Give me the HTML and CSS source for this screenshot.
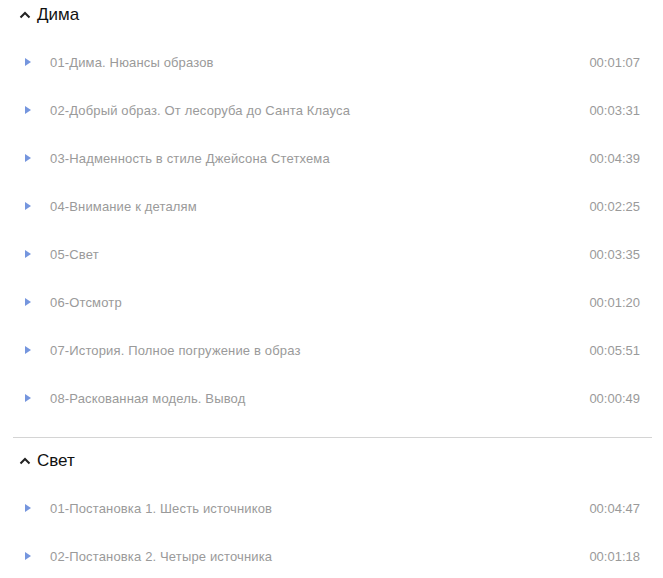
FILE: index.html
```html
<!DOCTYPE html>
<html lang="ru">

<head>
    <meta charset="UTF-8">
    <meta name="viewport" content="width=device-width, initial-scale=1.0">
    <title>Уроки</title>
    <link rel="stylesheet" href="styles.css">
</head>

<body>
    <div class="course">

        <div class="section">
            <div class="section-title">
                <svg class="chevron" width="12" height="8" viewBox="0 0 12 8"><path d="M1.5 6.5 L6 2 L10.5 6.5" fill="none" stroke="#222" stroke-width="2"/></svg>
                <span>Дима</span>
            </div>
            <ul class="lessons">
                <li class="lesson"><i class="play"></i><span class="name">01-Дима. Нюансы образов</span><span class="time">00:01:07</span></li>
                <li class="lesson"><i class="play"></i><span class="name">02-Добрый образ. От лесоруба до Санта Клауса</span><span class="time">00:03:31</span></li>
                <li class="lesson"><i class="play"></i><span class="name">03-Надменность в стиле Джейсона Стетхема</span><span class="time">00:04:39</span></li>
                <li class="lesson"><i class="play"></i><span class="name">04-Внимание к деталям</span><span class="time">00:02:25</span></li>
                <li class="lesson"><i class="play"></i><span class="name">05-Свет</span><span class="time">00:03:35</span></li>
                <li class="lesson"><i class="play"></i><span class="name">06-Отсмотр</span><span class="time">00:01:20</span></li>
                <li class="lesson"><i class="play"></i><span class="name">07-История. Полное погружение в образ</span><span class="time">00:05:51</span></li>
                <li class="lesson"><i class="play"></i><span class="name">08-Раскованная модель. Вывод</span><span class="time">00:00:49</span></li>
            </ul>
        </div>

        <div class="section">
            <div class="section-title">
                <svg class="chevron" width="12" height="8" viewBox="0 0 12 8"><path d="M1.5 6.5 L6 2 L10.5 6.5" fill="none" stroke="#222" stroke-width="2"/></svg>
                <span>Свет</span>
            </div>
            <ul class="lessons">
                <li class="lesson"><i class="play"></i><span class="name">01-Постановка 1. Шесть источников</span><span class="time">00:04:47</span></li>
                <li class="lesson"><i class="play"></i><span class="name">02-Постановка 2. Четыре источника</span><span class="time">00:01:18</span></li>
            </ul>
        </div>

    </div>
</body>

</html>
```

FILE: styles.css
```css
body {
    font-family: "Liberation Sans", Arial, sans-serif;
    margin: 0;
    padding: 0;
    background-color: #fff;
}

.course {
    padding: 0 11px 0 13px;
}

.section {
    padding-bottom: 15px;
    border-bottom: 1px solid #d4d4d4;
}

.section + .section {
    padding-top: 8px;
    border-bottom: none;
}

/* Заголовок раздела */
.section-title {
    display: flex;
    align-items: center;
    height: 30px;
    margin-bottom: 8px;
    font-size: 17px;
    color: #111;
}

.chevron {
    margin: 0 6px 0 6px;
}

.lessons {
    list-style: none;
    margin: 0;
    padding: 0;
}

.lesson {
    display: flex;
    align-items: center;
    height: 48px;
    font-size: 13px;
    color: #9a9a9a;
}

.play {
    width: 0;
    height: 0;
    margin: 0 19px 0 12px;
    border-top: 4.5px solid transparent;
    border-bottom: 4.5px solid transparent;
    border-left: 6px solid #7596de;
}

.name {
    flex: 1;
    letter-spacing: 0.15px;
}

.time {
    margin-right: 12px;
}
```
